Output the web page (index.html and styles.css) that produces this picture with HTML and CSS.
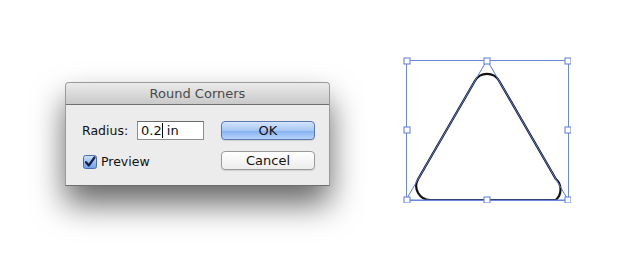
FILE: index.html
```html
<!DOCTYPE html>
<html lang="en">
<head>
    <meta charset="UTF-8">
    <title>Round Corners</title>
    <link rel="stylesheet" href="styles.css">
</head>
<body>
    <div class="stage">
        <div class="dialog">
            <div class="title-bar">Round Corners</div>
            <div class="dialog-body">
                <div class="fields">
                    <div class="field-row">
                        <span class="label label-radius">Radius:</span>
                        <div class="text-input"><span>0.2</span><span class="caret"></span><span>&nbsp;in</span></div>
                    </div>
                    <div class="field-row check-row">
                        <svg class="checkbox" width="14" height="14" viewBox="0 0 14 14">
                            <defs>
                                <linearGradient id="cbg" x1="0" y1="0" x2="0" y2="1">
                                    <stop offset="0" stop-color="#cfe1fb"/>
                                    <stop offset="1" stop-color="#6f9fe6"/>
                                </linearGradient>
                            </defs>
                            <rect x="0.5" y="0.5" width="13" height="13" rx="2" fill="url(#cbg)" stroke="#4a6fae"/>
                            <path d="M3 7.2 L5.8 10.5 L11.5 2.5" fill="none" stroke="#142345" stroke-width="2.2" stroke-linecap="round" stroke-linejoin="round"/>
                        </svg>
                        <span class="label">Preview</span>
                    </div>
                </div>
                <div class="buttons">
                    <button class="btn btn-default">OK</button>
                    <button class="btn">Cancel</button>
                </div>
            </div>
        </div>

        <svg class="art" width="168" height="146" viewBox="0 0 168 146">
            <!-- rounded result, original triangle path on top -->
            <path d="M71.85 24 A14 14 0 0 1 96.15 24 L152.85 122 A14 14 0 0 1 152.75 143 L27.25 143 A14 14 0 0 1 15.15 122 Z" fill="none" stroke="#111" stroke-width="2.2"/>
            <polygon points="84,3 3,143 165,143" fill="none" stroke="#5b7bd6" stroke-width="1"/>
            <rect x="3.5" y="3.5" width="162" height="140" fill="none" stroke="#6d88d8" stroke-width="1"/>
            <g fill="#fff" stroke="#5b7bd6" stroke-width="1">
                <rect x="1" y="1" width="6" height="6"/>
                <rect x="81" y="1" width="6" height="6"/>
                <rect x="162" y="1" width="6" height="6"/>
                <rect x="1" y="70" width="6" height="6"/>
                <rect x="162" y="70" width="6" height="6"/>
                <rect x="1" y="140" width="6" height="6"/>
                <rect x="81" y="140" width="6" height="6"/>
                <rect x="162" y="140" width="6" height="6"/>
            </g>
        </svg>
    </div>
</body>
</html>
```

FILE: styles.css
```css
* { margin: 0; padding: 0; box-sizing: border-box; }
html, body { min-height: 100%; }
body { background: #fff; font-family: 'DejaVu Sans', 'Liberation Sans', sans-serif; font-size: 12.5px; color: #111; }
.stage { display: flex; align-items: flex-start; min-height: 260px; padding: 57px 0 0 65px; }
.dialog { width: 265px; margin-top: 25px; background: #ececec; border: 1px solid #9a9a9a; border-bottom-color: #6e6e6e; border-radius: 4px 4px 0 0; box-shadow: 0 18px 32px rgba(0,0,0,0.6); }
.title-bar { height: 22px; line-height: 22px; text-align: center; font-size: 13px; color: #4a4a4a; background: linear-gradient(#ebebeb, #c9c9c9); border-bottom: 1px solid #6f6f6f; border-radius: 4px 4px 0 0; }
.dialog-body { display: flex; justify-content: space-between; padding: 16px 14px 14px 16px; }
.fields { display: flex; flex-direction: column; gap: 10px; }
.field-row { display: flex; align-items: center; height: 19px; }
.label { font-size: 12.5px; color: #111; }
.label-radius { width: 55px; }
.text-input { display: flex; align-items: center; width: 67px; height: 19px; padding-left: 3px; background: #fff; border: 1px solid #8f8f8f; border-top-color: #6a6a6a; font-size: 13px; }
.caret { width: 1px; height: 15px; background: #000; }
.check-row { gap: 4px; padding-left: 1px; margin-top: 2px; }
.checkbox { display: block; }
.buttons { display: flex; flex-direction: column; gap: 11px; }
.btn { width: 94px; height: 19px; font-family: inherit; font-size: 13px; color: #111; border: 1px solid #9a9a9a; border-radius: 4px; background: linear-gradient(#ffffff, #ededed); box-shadow: 0 1px 1px rgba(0,0,0,0.12); }
.btn-default { background: linear-gradient(#d4e4fb, #a7c7f5 50%, #84b1f1 51%, #b7d4fb); border-color: #5878b0; }
.art { margin-left: 73px; }
```
